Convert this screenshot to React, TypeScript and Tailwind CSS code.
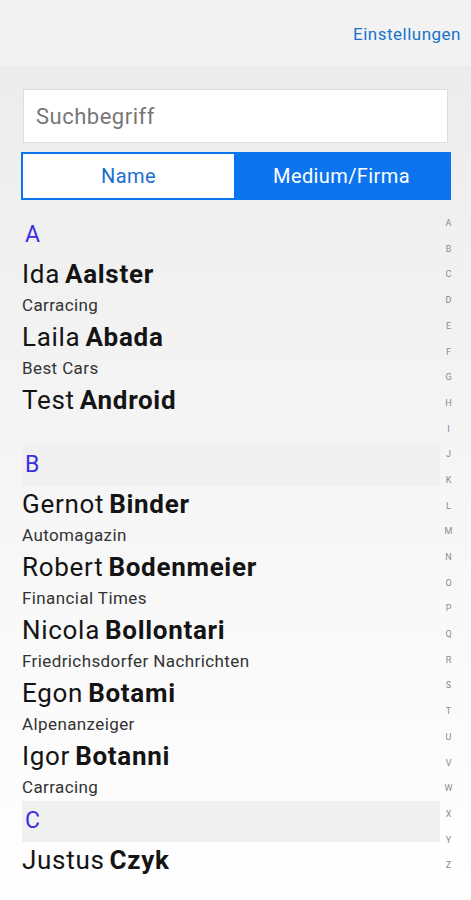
import React from "react";

type Person = { first: string; last: string; company?: string };

const sections: { letter: string; people: Person[] }[] = [
  {
    letter: "A",
    people: [
      { first: "Ida", last: "Aalster", company: "Carracing" },
      { first: "Laila", last: "Abada", company: "Best Cars" },
      { first: "Test", last: "Android" },
    ],
  },
  {
    letter: "B",
    people: [
      { first: "Gernot", last: "Binder", company: "Automagazin" },
      { first: "Robert", last: "Bodenmeier", company: "Financial Times" },
      { first: "Nicola", last: "Bollontari", company: "Friedrichsdorfer Nachrichten" },
      { first: "Egon", last: "Botami", company: "Alpenanzeiger" },
      { first: "Igor", last: "Botanni", company: "Carracing" },
    ],
  },
  {
    letter: "C",
    people: [{ first: "Justus", last: "Czyk" }],
  },
];

const alphabet = "ABCDEFGHIJKLMNOPQRSTUVWXYZ".split("");

export default function App() {
  return (
    <div
      className="w-[471px] h-[900px] overflow-hidden bg-gradient-to-b from-[#ebebeb] to-white"
      style={{ fontFamily: "Roboto, 'Noto Sans', sans-serif" }}
    >
      {/* top bar */}
      <div className="h-[66px] bg-[#f2f2f2] flex items-end justify-end pr-[10px] pb-[23px]">
        <span className="text-[17px] tracking-[0.5px] text-[#1a73c9] leading-none">Einstellungen</span>
      </div>

      <div className="pl-[21px] pr-[20px] pt-[23px]">
        <div className="h-[54px] ml-[2px] mr-[3px] bg-white border border-[#dcdcdc] flex items-center px-[12px]">
          <span className="text-[22px] tracking-[0.5px] text-[#767676]">Suchbegriff</span>
        </div>

        <div className="mt-[9px] h-[48px] flex border-[2px] border-[#0b74ee]">
          <div className="w-[211px] bg-white flex items-center justify-center text-[20px] tracking-[0.4px] text-[#1b6fd1]">
            Name
          </div>
          <div className="flex-1 bg-[#0b74ee] flex items-center justify-center text-[20px] tracking-[0.4px] text-white">
            Medium/Firma
          </div>
        </div>
      </div>

      <div className="flex mt-[15px] pl-[22px]">
        <div className="w-[418px]">
          {sections.map((s) => (
            <div key={s.letter}>
              <div className="h-[41px] bg-[#f0f0f0] flex items-center pl-[3px] text-[23px] text-[#3b2ee0]">
                {s.letter}
              </div>
              {s.people.map((p) => (
                <div key={p.last}>
                  <div className="h-[36px] flex items-center text-[26px] tracking-[0.7px] text-[#141414]">
                    <span>{p.first}</span>
                    <span className="font-bold ml-[5px]">{p.last}</span>
                  </div>
                  <div className="h-[27px] flex items-center text-[17px] tracking-[0.4px] text-[#333]">
                    {p.company ?? ""}
                  </div>
                </div>
              ))}
            </div>
          ))}
        </div>
        <div className="w-[15px] ml-[1px] -mt-[4px] flex flex-col items-center">
          {alphabet.map((l) => (
            <div key={l} className="h-[25.7px] flex items-center text-[9px] text-[#8a8a8a]">
              {l}
            </div>
          ))}
        </div>
      </div>
    </div>
  );
}
